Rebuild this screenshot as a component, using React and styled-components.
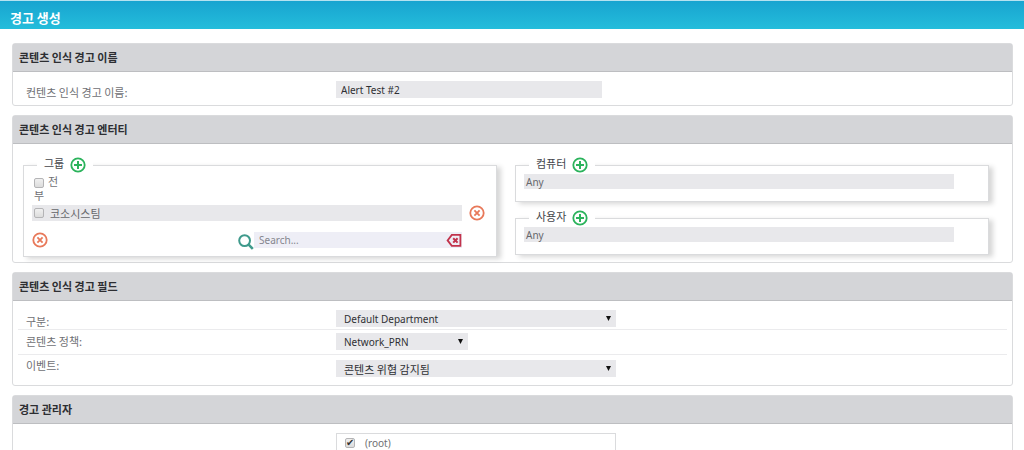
import { useState } from "react";
import styled, { createGlobalStyle, css } from "styled-components";

const GlobalStyle = createGlobalStyle`
  :root {
    --color-text: #44464b;
    --color-label: #6f7074;
    --color-field: #e8e8eb;
    --color-line: #dadbdd;
    --color-green: #2bb35c;
    --color-orange: #e8795a;
    --color-red: #c2334c;
    --color-teal: #3f9a8c;
    --font-latin: "Noto Sans", "Noto Sans CJK KR", sans-serif;
  }

  * {
    box-sizing: border-box;
  }

  body {
    margin: 0;
    background: #fff;
    color: var(--color-text);
    font-family: "Noto Sans CJK KR", sans-serif;
    font-size: 11px;
  }

  input,
  select,
  button {
    font: inherit;
    color: inherit;
  }
`;

const StyledPage = styled.div`
  height: 100vh;
  overflow: hidden;
`;

const StyledTopBar = styled.header`
  display: flex;
  align-items: center;
  height: 29px;
  padding: 5px 10px 0;
  border-top: 1px solid #b5e2f0;
  background: linear-gradient(#18a4d0, #24bddb);
`;

const StyledTitle = styled.h1`
  margin: 0;
  color: #fff;
  font-size: 13px;
  line-height: 18px;
  font-weight: 700;
`;

const StyledMain = styled.main`
  display: flex;
  flex-direction: column;
  gap: 9px;
  padding: 14px 11px 0 12px;
`;

const StyledCard = styled.section`
  border: 1px solid var(--color-line);
  border-radius: 3px;
`;

const StyledCardTitle = styled.h2`
  margin: 0;
  padding: 0 6px;
  height: 28px;
  border-bottom: 1px solid #bdbec1;
  background: #d4d5d8;
  color: #2d2e32;
  font-size: 11px;
  line-height: 26px;
  font-weight: 700;
`;

const StyledFields = styled.div`
  padding: 0 5px;
`;

const StyledFieldRow = styled.div`
  display: grid;
  grid-template-columns: 310px 1fr;
  align-items: ${(props) => props.$align || "center"};
  padding: ${(props) => props.$pad};
  padding-left: 8px;

  & + & {
    border-top: 1px solid #ebebed;
  }
`;

const StyledLabel = styled.label`
  color: var(--color-label);
  line-height: 11px;
`;

const latinText = css`
  font-family: var(--font-latin);
  font-size: 10px;
`;

const fieldStyles = css`
  height: 17px;
  border: 0;
  border-radius: 0;
  outline: 0;
  background-color: var(--color-field);
  color: #2f3034;
`;

const StyledInput = styled.input`
  ${fieldStyles}
  ${latinText}
  width: 266px;
  padding: 0 5px;
`;

const StyledSelect = styled.select`
  ${fieldStyles}
  ${(props) => !props.$korean && latinText}
  width: ${(props) => (props.$small ? "132px" : "280px")};
  padding: 0 16px 0 8px;
  appearance: none;
  background-image: url("data:image/svg+xml,%3Csvg xmlns='http://www.w3.org/2000/svg' width='5' height='5'%3E%3Cpath d='M0 0h5L2.5 5z' fill='%23111'/%3E%3C/svg%3E");
  background-repeat: no-repeat;
  background-position: right 5px center;
`;

const StyledEntities = styled.div`
  display: grid;
  grid-template-columns: 1fr 1fr;
  align-items: start;
  gap: 18px;
  padding: 12px 23px 5px 10px;
`;

const StyledColumn = styled.div`
  display: flex;
  flex-direction: column;
  gap: 7px;
`;

const StyledFieldset = styled.fieldset`
  min-width: 0;
  margin: 0;
  padding: ${(props) => (props.$wide ? "0 11px 6px 8px" : "0 34px 12px 8px")};
  border: 1px solid var(--color-line);
  background: #fff;
  box-shadow: 4px 2px 5px rgb(0 0 0 / 0.16);
`;

const StyledLegend = styled.legend`
  display: flex;
  align-items: flex-start;
  gap: 6px;
  height: 18px;
  margin-left: 5px;
  padding: 1px 7px;
  background: #fff;
  color: var(--color-text);
  line-height: 13px;
`;

const StyledIconButton = styled.button`
  display: block;
  flex: none;
  width: 16px;
  height: 16px;
  padding: 0;
  border: 0;
  background: none;
  color: ${(props) => `var(--color-${props.$color})`};
  cursor: pointer;

  svg {
    display: block;
  }
`;

const StyledEntry = styled.div`
  display: flex;
  align-items: center;
  flex: 1;
  height: 16px;
  padding: 0 2px;
  background: var(--color-field);
  color: #66676c;

  ${(props) =>
    props.$plain &&
    css`
      ${latinText}
      height: 15px;
    `}
`;

const StyledCheckbox = styled.input`
  appearance: none;
  position: relative;
  flex: none;
  width: 10px;
  height: 10px;
  margin: 0;
  border: 1px solid #b4b4b6;
  border-radius: 2px;
  background: linear-gradient(#f0f0f0, #dcdcdc);
  vertical-align: middle;

  &:checked::after {
    content: "✔";
    position: absolute;
    inset: 0;
    color: #333;
    font-family: "DejaVu Sans", sans-serif;
    font-size: 10px;
    line-height: 8px;
    text-align: center;
  }
`;

const StyledSelectAll = styled.label`
  display: block;
  width: 28px;
  margin: 0 0 3px 2px;
  color: var(--color-label);
  line-height: 14px;

  ${StyledCheckbox} {
    margin-right: 4px;
  }
`;

const StyledCheckLabel = styled.label`
  display: flex;
  align-items: center;
  gap: 6px;
`;

const StyledRow = styled.div`
  display: flex;
  align-items: center;
  gap: 7px;
`;

const StyledToolRow = styled.div`
  display: flex;
  align-items: flex-start;
  justify-content: space-between;
  margin-top: 11px;
  padding-right: 23px;
`;

const StyledSearch = styled.div`
  display: flex;
  align-items: flex-start;

  & > svg {
    margin-top: 2px;
    color: var(--color-teal);
  }
`;

const StyledSearchBox = styled.div`
  display: flex;
  align-items: center;
  width: 208px;
  height: 16px;
  background: #eeeef6;
`;

const StyledSearchInput = styled.input`
  ${latinText}
  flex: 1;
  min-width: 0;
  height: 16px;
  padding: 0 5px;
  border: 0;
  outline: 0;
  background: transparent;

  &::placeholder {
    color: #85868e;
    opacity: 1;
  }
`;

const StyledTree = styled.div`
  width: 280px;
  min-height: 120px;
  padding: 1px 8px;
  border: 1px solid var(--color-line);
  color: var(--color-label);
  line-height: 16px;

  ${StyledCheckLabel} {
    ${latinText}
    gap: 10px;
  }
`;

function AddIcon() {
  return (
    <svg width="16" height="16" viewBox="0 0 16 16" fill="none" stroke="currentColor" strokeWidth="2">
      <circle cx="8" cy="8" r="6.7" strokeWidth="1.8" />
      <path d="M8 4v8M4 8h8" />
    </svg>
  );
}

function RemoveIcon() {
  return (
    <svg width="16" height="16" viewBox="0 0 16 16" fill="none" stroke="currentColor">
      <circle cx="8" cy="8" r="6.7" strokeWidth="1.8" />
      <path d="M5.4 5.4l5.2 5.2M10.6 5.4l-5.2 5.2" strokeWidth="1.8" />
    </svg>
  );
}

function SearchIcon() {
  return (
    <svg width="16" height="16" viewBox="0 0 16 16" fill="none" stroke="currentColor">
      <circle cx="6.6" cy="6.6" r="5.4" strokeWidth="2" />
      <path d="M10.6 10.6l4.2 4.2" strokeWidth="2.6" />
    </svg>
  );
}

function ClearIcon() {
  return (
    <svg width="16" height="16" viewBox="0 0 16 16" fill="none" stroke="currentColor">
      <path d="M5.8 2.9h8.6v11H5.8L1.6 8.4z" strokeWidth="1.8" />
      <path d="M7.2 6.2l4.4 4.4M11.6 6.2l-4.4 4.4" strokeWidth="2" />
    </svg>
  );
}

function EntityBox({ title, value }) {
  return (
    <StyledFieldset>
      <StyledLegend>
        {title}
        <StyledIconButton type="button" $color="green" aria-label={title}>
          <AddIcon />
        </StyledIconButton>
      </StyledLegend>
      <StyledEntry $plain>{value}</StyledEntry>
    </StyledFieldset>
  );
}

function GroupBox() {
  const [search, setSearch] = useState("");

  return (
    <StyledFieldset $wide>
      <StyledLegend>
        그룹
        <StyledIconButton type="button" $color="green" aria-label="그룹">
          <AddIcon />
        </StyledIconButton>
      </StyledLegend>
      <StyledSelectAll>
        <StyledCheckbox type="checkbox" />
        전부
      </StyledSelectAll>
      <StyledRow>
        <StyledEntry>
          <StyledCheckLabel>
            <StyledCheckbox type="checkbox" />
            코소시스팀
          </StyledCheckLabel>
        </StyledEntry>
        <StyledIconButton type="button" $color="orange" aria-label="코소시스팀">
          <RemoveIcon />
        </StyledIconButton>
      </StyledRow>
      <StyledToolRow>
        <StyledIconButton type="button" $color="orange" aria-label="전부">
          <RemoveIcon />
        </StyledIconButton>
        <StyledSearch>
          <SearchIcon />
          <StyledSearchBox>
            <StyledSearchInput
              type="text"
              placeholder="Search..."
              aria-label="Search..."
              value={search}
              onChange={(e) => setSearch(e.target.value)}
            />
            <StyledIconButton
              type="button"
              $color="red"
              aria-label="Clear"
              onClick={() => setSearch("")}
            >
              <ClearIcon />
            </StyledIconButton>
          </StyledSearchBox>
        </StyledSearch>
      </StyledToolRow>
    </StyledFieldset>
  );
}

function App() {
  return (
    <StyledPage>
      <GlobalStyle />
      <StyledTopBar>
        <StyledTitle>경고 생성</StyledTitle>
      </StyledTopBar>
      <StyledMain>
        <StyledCard>
          <StyledCardTitle>콘텐츠 인식 경고 이름</StyledCardTitle>
          <StyledFields>
            <StyledFieldRow $pad="9px 0 7px" $align="end">
              <StyledLabel htmlFor="name">컨텐츠 인식 경고 이름:</StyledLabel>
              <StyledInput id="name" type="text" defaultValue="Alert Test #2" />
            </StyledFieldRow>
          </StyledFields>
        </StyledCard>

        <StyledCard>
          <StyledCardTitle>콘텐츠 인식 경고 엔터티</StyledCardTitle>
          <StyledEntities>
            <GroupBox />
            <StyledColumn>
              <EntityBox title="컴퓨터" value="Any" />
              <EntityBox title="사용자" value="Any" />
            </StyledColumn>
          </StyledEntities>
        </StyledCard>

        <StyledCard>
          <StyledCardTitle>콘텐츠 인식 경고 필드</StyledCardTitle>
          <StyledFields>
            <StyledFieldRow $pad="9px 0 2px" $align="end">
              <StyledLabel htmlFor="department">구분:</StyledLabel>
              <StyledSelect id="department">
                <option>Default Department</option>
              </StyledSelect>
            </StyledFieldRow>
            <StyledFieldRow $pad="3px 0 4px">
              <StyledLabel htmlFor="policy">콘텐츠 정책:</StyledLabel>
              <StyledSelect id="policy" $small>
                <option>Network_PRN</option>
              </StyledSelect>
            </StyledFieldRow>
            <StyledFieldRow $pad="5px 0 8px" $align="start">
              <StyledLabel htmlFor="event">이벤트:</StyledLabel>
              <StyledSelect id="event" $korean>
                <option>콘텐츠 위협 감지됨</option>
              </StyledSelect>
            </StyledFieldRow>
          </StyledFields>
        </StyledCard>

        <StyledCard>
          <StyledCardTitle>경고 관리자</StyledCardTitle>
          <StyledFields>
            <StyledFieldRow $pad="9px 0">
              <span />
              <StyledTree>
                <StyledCheckLabel>
                  <StyledCheckbox type="checkbox" defaultChecked />
                  (root)
                </StyledCheckLabel>
              </StyledTree>
            </StyledFieldRow>
          </StyledFields>
        </StyledCard>
      </StyledMain>
    </StyledPage>
  );
}

export default App;
